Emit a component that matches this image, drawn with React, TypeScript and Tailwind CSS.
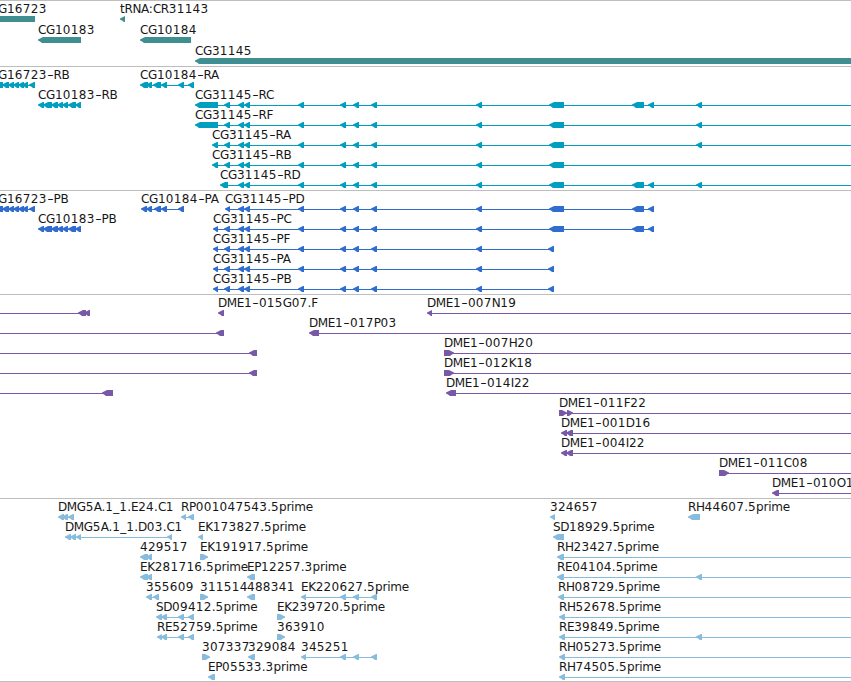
import { clsx } from 'clsx';

type Span = [number, number];

interface Feature {
  label?: string;
  blocks: Span[];
  forward?: boolean;
  line?: Span;
}

interface TrackData {
  name: string;
  color: string;
  tall?: boolean;
  last?: boolean;
  rows: Feature[][];
}

const VIEW_WIDTH = 851;

const f = (label: string, blocks: Span[], end?: number, forward = false): Feature => ({
  label,
  blocks,
  forward,
  line: [blocks[0][0] + 3, end ?? blocks[blocks.length - 1][1]],
});

const incoming = (...blocks: Span[]): Feature => ({
  blocks,
  line: [0, blocks[blocks.length - 1][1]],
});

// exons shared by the CG31145 isoforms
const first: Span = [224, 230];
const middle: Span[] = [[238, 244], [244, 250], [298, 304], [340, 346], [353, 359], [371, 377], [476, 482]];
const big: Span = [549, 564];
const pair: Span[] = [[632, 644], [648, 654]];
const far: Span = [696, 702];

const cg16723: Span[] = [[-8, 3], [2, 9], [8, 14], [13, 19], [18, 24], [22, 28], [29, 35]];
const cg10183: Span[] = [[38, 44], [43, 52], [51, 58], [57, 63], [62, 68], [68, 76], [75, 81]];
const est: Span[] = [[301, 306], [340, 346], [353, 359], [371, 377]];

const tracks: TrackData[] = [
  {
    name: 'genes',
    color: '#3e8e92',
    tall: true,
    rows: [
      [f('G16723', [[-10, 35]]), f('tRNA:CR31143', [[120, 125]])],
      [f('CG10183', [[38, 81]]), f('CG10184', [[140, 191]])],
      [f('CG31145', [[195, 860]])],
    ],
  },
  {
    name: 'transcripts',
    color: '#009ebf',
    rows: [
      [
        f('G16723-RB', cg16723),
        f('CG10184-RA', [[140, 148], [146, 152], [153, 161], [161, 167], [178, 184], [188, 194]]),
      ],
      [f('CG10183-RB', cg10183), f('CG31145-RC', [[195, 218], first, ...middle, big, ...pair, far], VIEW_WIDTH)],
      [f('CG31145-RF', [[195, 218], first, ...middle, big, far], VIEW_WIDTH)],
      [f('CG31145-RA', [[212, 218], first, ...middle, big, far], VIEW_WIDTH)],
      [f('CG31145-RB', [[212, 218], first, ...middle, big], VIEW_WIDTH)],
      [f('CG31145-RD', [[220, 228], ...middle, big, ...pair, far], VIEW_WIDTH)],
    ],
  },
  {
    name: 'proteins',
    color: '#316dcf',
    rows: [
      [
        f('G16723-PB', cg16723),
        f('CG10184-PA', [[141, 147], [146, 152], [154, 161], [161, 167], [178, 184]]),
        f('CG31145-PD', [[225, 230], ...middle, big, ...pair]),
      ],
      [f('CG10183-PB', cg10183), f('CG31145-PC', [[213, 218], first, ...middle, big, ...pair])],
      [f('CG31145-PF', [[213, 218], first, ...middle, [548, 554]])],
      [f('CG31145-PA', [[213, 218], first, ...middle, [548, 554]])],
      [f('CG31145-PB', [[213, 218], first, ...middle, [548, 554]])],
    ],
  },
  {
    name: 'clones',
    color: '#7859a6',
    rows: [
      [
        incoming([78, 86], [84, 90]),
        f('DME1-015G07.F', [[218, 224]]),
        f('DME1-007N19', [[427, 432]], VIEW_WIDTH),
      ],
      [incoming([216, 224]), f('DME1-017P03', [[309, 319]], VIEW_WIDTH)],
      [incoming([249, 257]), f('DME1-007H20', [[444, 454]], VIEW_WIDTH, true)],
      [incoming([249, 257]), f('DME1-012K18', [[444, 454]], VIEW_WIDTH, true)],
      [incoming([102, 113]), f('DME1-014I22', [[446, 456]], VIEW_WIDTH)],
      [f('DME1-011F22', [[559, 567], [567, 573]], VIEW_WIDTH, true)],
      [f('DME1-001D16', [[561, 567], [566, 573]], VIEW_WIDTH)],
      [f('DME1-004I22', [[561, 567], [566, 573]], VIEW_WIDTH)],
      [f('DME1-011C08', [[719, 729]], VIEW_WIDTH, true)],
      [f('DME1-010O1', [[772, 779]], VIEW_WIDTH)],
    ],
  },
  {
    name: 'ests',
    color: '#87bcdd',
    last: true,
    rows: [
      [
        f('DMG5A.1_1.E24.C1', [[58, 64], [62, 68], [68, 74]]),
        f('RP001047543.5prime', [[181, 186], [188, 194]]),
        f('324657', [[550, 555]]),
        f('RH44607.5prime', [[688, 700]]),
      ],
      [
        f('DMG5A.1_1.D03.C1', [[65, 71], [70, 76], [76, 81], [167, 172]]),
        f('EK173827.5prime', [[198, 203]]),
        f('SD18929.5prime', [[553, 564]]),
      ],
      [
        f('429517', [[140, 148], [146, 152]]),
        f('EK191917.5prime', [[200, 208]], undefined, true),
        f('RH23427.5prime', [[557, 564]], VIEW_WIDTH),
      ],
      [
        f('EK281716.5prime', [[140, 148], [146, 152]]),
        f('EP12257.3prime', [[247, 255]]),
        f('RE04104.5prime', [[557, 564], far], VIEW_WIDTH),
      ],
      [
        f('355609', [[146, 152], [153, 159]]),
        f('311514', [[200, 208]], undefined, true),
        f('488341', [[247, 255]]),
        f('EK220627.5prime', est),
        f('RH08729.5prime', [[558, 564]], VIEW_WIDTH),
      ],
      [
        f('SD09412.5prime', [[156, 162], [161, 167], [178, 184], [188, 194]]),
        f('EK239720.5prime', [[277, 285]], undefined, true),
        f('RH52678.5prime', [[559, 565]], VIEW_WIDTH),
      ],
      [
        f('RE52759.5prime', [[157, 162], [161, 167], [178, 184], [188, 194]]),
        f('363910', [[277, 285]], undefined, true),
        f('RE39849.5prime', [[559, 565], far], VIEW_WIDTH),
      ],
      [
        f('307337', [[202, 210]], undefined, true),
        f('329084', [[248, 255]]),
        f('345251', est),
        f('RH05273.5prime', [[559, 565]], VIEW_WIDTH),
      ],
      [f('EP05533.3prime', [[208, 215]]), f('RH74505.5prime', [[559, 565]], VIEW_WIDTH)],
    ],
  },
];

function blockPath([start, end]: Span, forward?: boolean) {
  const head = Math.min(5, end - start);
  if (forward) {
    return `M${start} 0H${end - head}L${end - 2} 1.5L${end} 2.5V3.5L${end - 2} 4.5L${end - head + 1} 6H${start}Z`;
  }
  return `M${end} 0H${start + head}L${start + 2} 1.5L${start} 2.5V3.5L${start + 2} 4.5L${start + head - 1} 6H${end}Z`;
}

// Digits and hyphens have fixed-width cells, letters keep close to their own advance
function Label({ text, x }: { text: string; x: number }) {
  const runs = text.match(/\d+|-|[a-z]+|[A-Z]+|[^\dA-Za-z-]+/g) ?? [];
  return (
    <span
      className="absolute top-0 whitespace-pre font-['DejaVu_Sans',sans-serif] text-[12px] leading-[16px] text-neutral-900"
      style={{ left: x }}
    >
      {runs.map((run, i) => (
        <span
          key={i}
          className={clsx(
            /\d/.test(run) && 'tracking-[0.3px]',
            run === '-' && 'inline-block w-[7px] scale-x-150 text-center',
            /[a-z]/.test(run) && 'tracking-[-0.2px]',
            /[A-Z]/.test(run) && 'tracking-[-0.4px]',
          )}
        >
          {run}
        </span>
      ))}
    </span>
  );
}

function Row({ features, color, tall }: { features: Feature[]; color: string; tall?: boolean }) {
  return (
    <div className={clsx('relative flex flex-col pt-[15px]', tall ? 'h-[21px]' : 'h-5')}>
      <svg width={VIEW_WIDTH} height="6" className="block shrink-0" fill={color}>
        {features.map((feature, i) => (
          <g key={i}>
            {feature.line && (
              <rect x={feature.line[0]} y="3" width={feature.line[1] - feature.line[0]} height="1" />
            )}
            {feature.blocks.map((block, j) => (
              <path key={j} d={blockPath(block, feature.forward)} />
            ))}
          </g>
        ))}
      </svg>
      {features.map(
        (feature, i) =>
          feature.label && <Label key={i} text={feature.label} x={Math.max(feature.blocks[0][0], -2)} />,
      )}
    </div>
  );
}

function Track({ track }: { track: TrackData }) {
  return (
    <section
      className={clsx('border-t border-[#bebebe]', track.tall || track.last ? 'pb-[2px]' : 'pb-[3px]')}
      aria-label={track.name}
    >
      {track.rows.map((features, i) => (
        <Row key={i} features={features} color={track.color} tall={track.tall} />
      ))}
    </section>
  );
}

export default function App() {
  return (
    <main className="h-[682px] w-[851px] overflow-hidden border-b border-[#bebebe] bg-white">
      {tracks.map((track) => (
        <Track key={track.name} track={track} />
      ))}
    </main>
  );
}
